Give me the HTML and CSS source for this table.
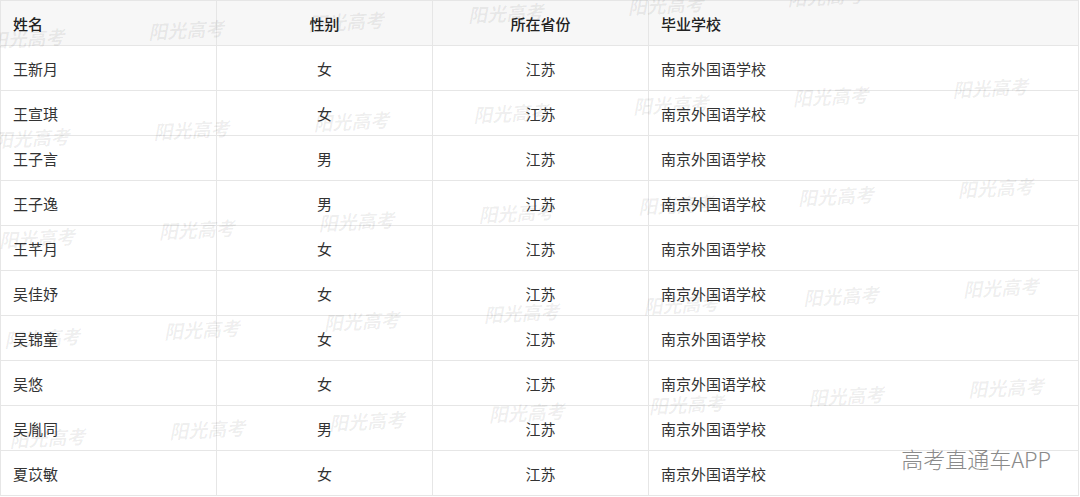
FILE: index.html
```html
<!DOCTYPE html>
<html lang="zh-CN">
<head>
  <meta charset="UTF-8">
  <meta name="viewport" content="width=device-width, initial-scale=1.0">
  <title>南京外国语学校</title>
  <link rel="stylesheet" href="styles.css">
</head>
<body>

  <div class="page">
    <table class="list">
      <colgroup>
        <col class="col-name">
        <col class="col-sex">
        <col class="col-prov">
        <col>
      </colgroup>
      <thead>
        <tr>
          <th class="left">姓名</th>
          <th>性别</th>
          <th>所在省份</th>
          <th class="left">毕业学校</th>
        </tr>
      </thead>
      <tbody>
        <tr><td class="left">王新月</td><td>女</td><td>江苏</td><td class="left">南京外国语学校</td></tr>
        <tr><td class="left">王宣琪</td><td>女</td><td>江苏</td><td class="left">南京外国语学校</td></tr>
        <tr><td class="left">王子言</td><td>男</td><td>江苏</td><td class="left">南京外国语学校</td></tr>
        <tr><td class="left">王子逸</td><td>男</td><td>江苏</td><td class="left">南京外国语学校</td></tr>
        <tr><td class="left">王芊月</td><td>女</td><td>江苏</td><td class="left">南京外国语学校</td></tr>
        <tr><td class="left">吴佳妤</td><td>女</td><td>江苏</td><td class="left">南京外国语学校</td></tr>
        <tr><td class="left">吴锦童</td><td>女</td><td>江苏</td><td class="left">南京外国语学校</td></tr>
        <tr><td class="left">吴悠</td><td>女</td><td>江苏</td><td class="left">南京外国语学校</td></tr>
        <tr><td class="left">吴胤同</td><td>男</td><td>江苏</td><td class="left">南京外国语学校</td></tr>
        <tr><td class="left">夏苡敏</td><td>女</td><td>江苏</td><td class="left">南京外国语学校</td></tr>
      </tbody>
    </table>

    <!-- watermark layer, filled below -->
    <div class="watermark" id="watermark"></div>

    <div class="app-mark">高考直通车APP</div>
  </div>

  <script>
    const watermark = document.getElementById('watermark');
    // 7 columns x 5 rows of the same stamp
    for (let i = 0; i < 35; i++) {
      const span = document.createElement('span');
      span.textContent = '阳光高考';
      watermark.appendChild(span);
    }
  </script>
</body>
</html>
```

FILE: styles.css
```css
body {
  margin: 0;
  background: #fff;
  font-family: "Noto Sans CJK SC", "Noto Sans", sans-serif;
  color: #333;
}
.page {
  position: relative;
  width: 1080px;
  height: 497px;
  overflow: hidden;
}
/* Table */
.list {
  width: 1079px;
  border-collapse: collapse;
  table-layout: fixed;
  font-size: 15px;
}
.col-name,
.col-sex,
.col-prov {
  width: 216px;
}
.list th,
.list td {
  height: 44px;
  padding: 0 12px;
  border: 1px solid #e6e6e6;
  text-align: center;
  vertical-align: middle;
  white-space: nowrap;
}
.list th {
  background-color: #f7f7f7;
  font-weight: 500;
  color: #222;
}
.list .left {
  text-align: left;
}
/* Watermark stamps */
.watermark {
  position: absolute;
  left: -12px;
  top: 32px;
  display: grid;
  grid-template-columns: repeat(7, 160px);
  grid-auto-rows: 100px;
  transform: rotate(-3deg);
  transform-origin: top left;
  pointer-events: none;
}
.watermark span {
  font-family: "Liberation Serif", "Noto Sans CJK SC", serif;
  font-size: 19px;
  font-weight: 700;
  font-style: italic;
  color: rgba(0, 0, 0, 0.065);
  line-height: 20px;
}
.app-mark {
  position: absolute;
  right: 29px;
  top: 444px;
  font-size: 22px;
  color: #8a8a8a;
  font-weight: 300;
  line-height: 28px;
}
```
